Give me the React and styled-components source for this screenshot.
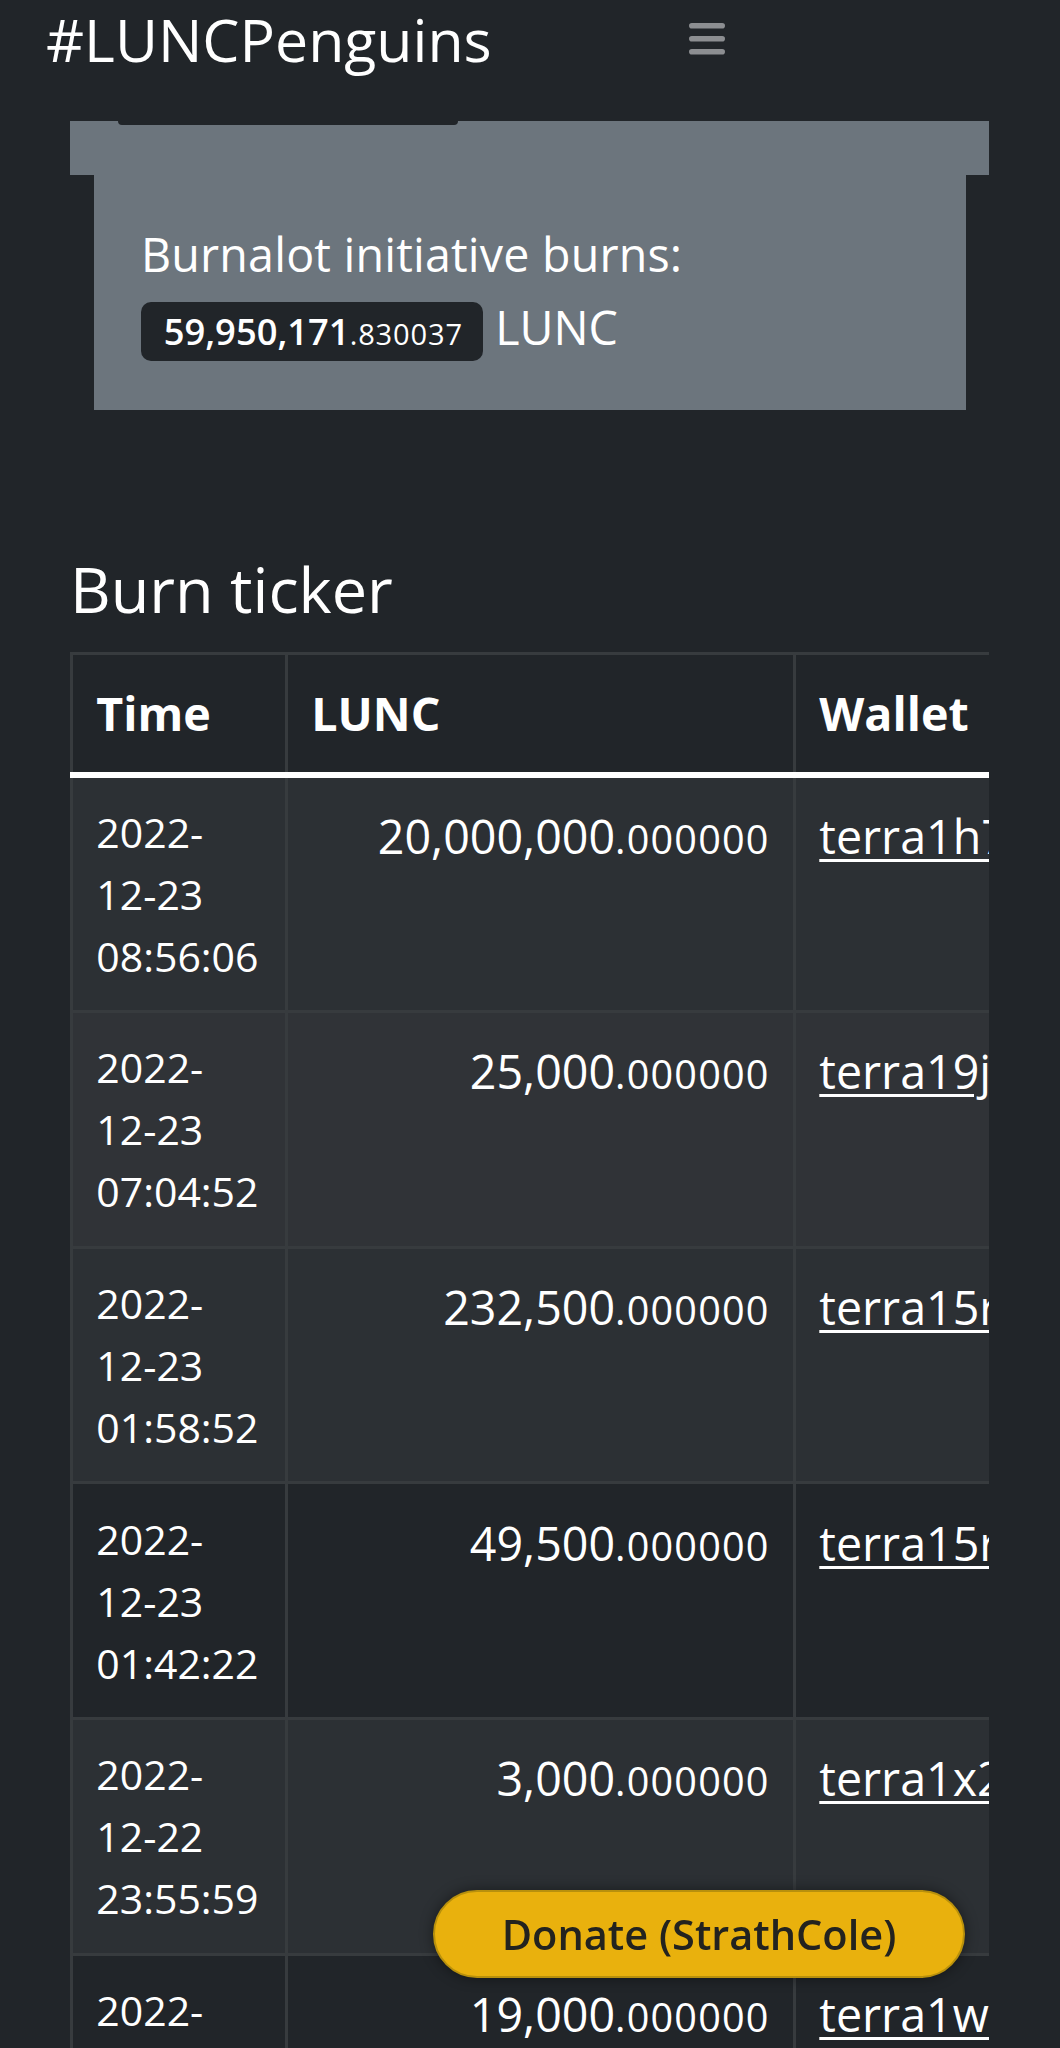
import React from 'react';
import styled, { createGlobalStyle } from 'styled-components';

const GlobalStyle = createGlobalStyle`
  html, body {
    margin: 0;
    padding: 0;
    overflow: hidden;
    background: #212529;
  }
  body {
    font-family: "Open Sans", "Noto Sans", sans-serif;
    font-size: 46.6px;
    line-height: 1.5;
    color: #fff;
  }
  * { box-sizing: border-box; }
`;

const burns = [
  { date: '2022-', day: '12-23', time: '08:56:06', whole: '20,000,000', dec: '.000000', wallet: 'terra1h7tkq0e3ml8jw5yq4cz2s9lvdp6x0rn7fwa3gu' },
  { date: '2022-', day: '12-23', time: '07:04:52', whole: '25,000', dec: '.000000', wallet: 'terra19jq2lmz0t4vx7yfsd3kc8ewp5ugr6hn9a0e2xk' },
  { date: '2022-', day: '12-23', time: '01:58:52', whole: '232,500', dec: '.000000', wallet: 'terra15r8kx9tyq4w2nv7hzd3l0cupe6sfm5ga1j8mqx' },
  { date: '2022-', day: '12-23', time: '01:42:22', whole: '49,500', dec: '.000000', wallet: 'terra15r8kx9tyq4w2nv7hzd3l0cupe6sfm5ga1j8mqx' },
  { date: '2022-', day: '12-22', time: '23:55:59', whole: '3,000', dec: '.000000', wallet: 'terra1x2z7vnq4ckd8ls0y3wpe5hf9tmrg6ua2jx0kq7' },
  { date: '2022-', day: '12-22', time: '21:14:37', whole: '19,000', dec: '.000000', wallet: 'terra1wq5e8dn3k0ys7xhc2mlt9vfp4zg6ra8ju1n0ke' },
];

const App = () => (
  <Page>
    <GlobalStyle />
    <Navbar>
      <Brand href="#">#LUNCPenguins</Brand>
      <Toggler aria-label="Toggle navigation">
        <svg width="36" height="32" viewBox="0 0 36 32">
          <g stroke="#8c8e91" strokeWidth="5.6" strokeLinecap="round">
            <line x1="2.8" y1="2.8" x2="33.2" y2="2.8" />
            <line x1="2.8" y1="15.8" x2="33.2" y2="15.8" />
            <line x1="2.8" y1="28.8" x2="33.2" y2="28.8" />
          </g>
        </svg>
      </Toggler>
    </Navbar>

    <Band>
      <Peek />
    </Band>
    <Panel>
      <Label>Burnalot initiative burns:</Label>
      <TotalLine>
        <Badge>
          59,950,171<Decimals $scale="0.8em">.830037</Decimals>
        </Badge>{' '}
        LUNC
      </TotalLine>
    </Panel>

    <Section>
      <Heading>Burn ticker</Heading>
      <TableWrap>
        <Table>
          <colgroup>
            <col style={{ width: 215 }} />
            <col style={{ width: 508 }} />
            <col style={{ width: 760 }} />
          </colgroup>
          <thead>
            <tr>
              <Th>Time</Th>
              <Th>LUNC</Th>
              <Th>Wallet</Th>
            </tr>
          </thead>
          <tbody>
            {burns.map((b, i) => (
              <Row key={i} $shade={i === 1 ? 'hover' : i % 2 === 0 ? 'stripe' : 'plain'}>
                <Td>
                  <TimeText>
                    {b.date}
                    <br />
                    {b.day}
                    <br />
                    {b.time}
                  </TimeText>
                </Td>
                <AmountTd>
                  {b.whole}
                  <Decimals $scale="0.85em">{b.dec}</Decimals>
                </AmountTd>
                <WalletTd>
                  <WalletLink href="#">{b.wallet}</WalletLink>
                </WalletTd>
              </Row>
            ))}
          </tbody>
        </Table>
      </TableWrap>
    </Section>

    <DonateButton type="button">Donate (StrathCole)</DonateButton>
  </Page>
);

const Page = styled.div`
  width: 1060px;
  height: 2048px;
  overflow: hidden;
  position: relative;
`;

const Navbar = styled.nav`
  height: 121px;
  display: flex;
  align-items: flex-start;
  padding: 0 335px 0 46px;
`;

const Brand = styled.a`
  font-size: 59px;
  line-height: 59px;
  margin-top: 9.5px;
  color: #fff;
  text-decoration: none;
  white-space: nowrap;
`;

const Toggler = styled.button`
  margin-left: auto;
  margin-top: 23px;
  padding: 0;
  border: 0;
  background: none;
  line-height: 0;
`;

const Band = styled.div`
  height: 54px;
  margin: 0 71px 0 70px;
  background: #6c757d;
`;

const Peek = styled.div`
  width: 340px;
  height: 4px;
  margin-left: 48px;
  background: #212529;
  border-radius: 0 0 10px 10px;
`;

const Panel = styled.div`
  margin: 0 94px;
  padding: 44px 47px 48px;
  background: #6c757d;
`;

const Label = styled.div`
  line-height: 70px;
  letter-spacing: 0.2px;
`;

const TotalLine = styled.div`
  padding-top: 3px;
  line-height: 70px;
  white-space: nowrap;
`;

const Badge = styled.span`
  display: inline-block;
  padding: 11.5px 20px 11.5px 22.7px;
  font-size: 0.78em;
  font-weight: 600;
  line-height: 1;
  border-radius: 10px;
  background: #212529;
  color: #fff;
`;

const Decimals = styled.span`
  font-size: ${(p) => p.$scale};
  font-weight: 400;
  letter-spacing: 0.03em;
`;

const Section = styled.section`
  padding: 0 71px 0 70px;
  margin-top: 142px;
`;

const Heading = styled.h4`
  margin: 0 0 26px;
  font-size: 63px;
  font-weight: 400;
  line-height: 74px;
`;

const TableWrap = styled.div`
  width: 919px;
  overflow: hidden;
`;

const Table = styled.table`
  table-layout: fixed;
  width: 1483px;
  border-collapse: collapse;
  color: #fff;
`;

const Th = styled.th`
  padding: 23.3px;
  text-align: left;
  font-weight: 700;
  line-height: 70px;
  border: 3px solid #373b3e;
  border-bottom: 6px solid #fff;
  background: #212529;
`;

const shades = {
  stripe: '#2c3034',
  hover: '#303337',
  plain: '#212529',
};

const Row = styled.tr`
  background: ${(p) => shades[p.$shade]};
`;

const Td = styled.td`
  padding: 23.3px;
  vertical-align: top;
  border: 3px solid #373b3e;
  line-height: 70px;
`;

const TimeText = styled.div`
  font-size: 41px;
  line-height: 62px;
  white-space: nowrap;
`;

const AmountTd = styled(Td)`
  text-align: right;
  white-space: nowrap;
`;

const WalletTd = styled(Td)`
  white-space: nowrap;
`;

const WalletLink = styled.a`
  color: #fff;
  text-decoration: underline;
  text-decoration-thickness: 3px;
  text-underline-offset: 5px;
`;

const DonateButton = styled.button`
  position: fixed;
  right: 95px;
  bottom: 70px;
  width: 532px;
  height: 88px;
  border-radius: 44px;
  border: 2px solid #b8900c;
  background: #e9b10d;
  color: #23231f;
  font-family: "Open Sans", "Noto Sans", sans-serif;
  font-size: 41.5px;
  font-weight: 600;
  box-shadow: 0 0 14px rgba(0, 0, 0, 0.45);
  cursor: pointer;
`;

export default App;
